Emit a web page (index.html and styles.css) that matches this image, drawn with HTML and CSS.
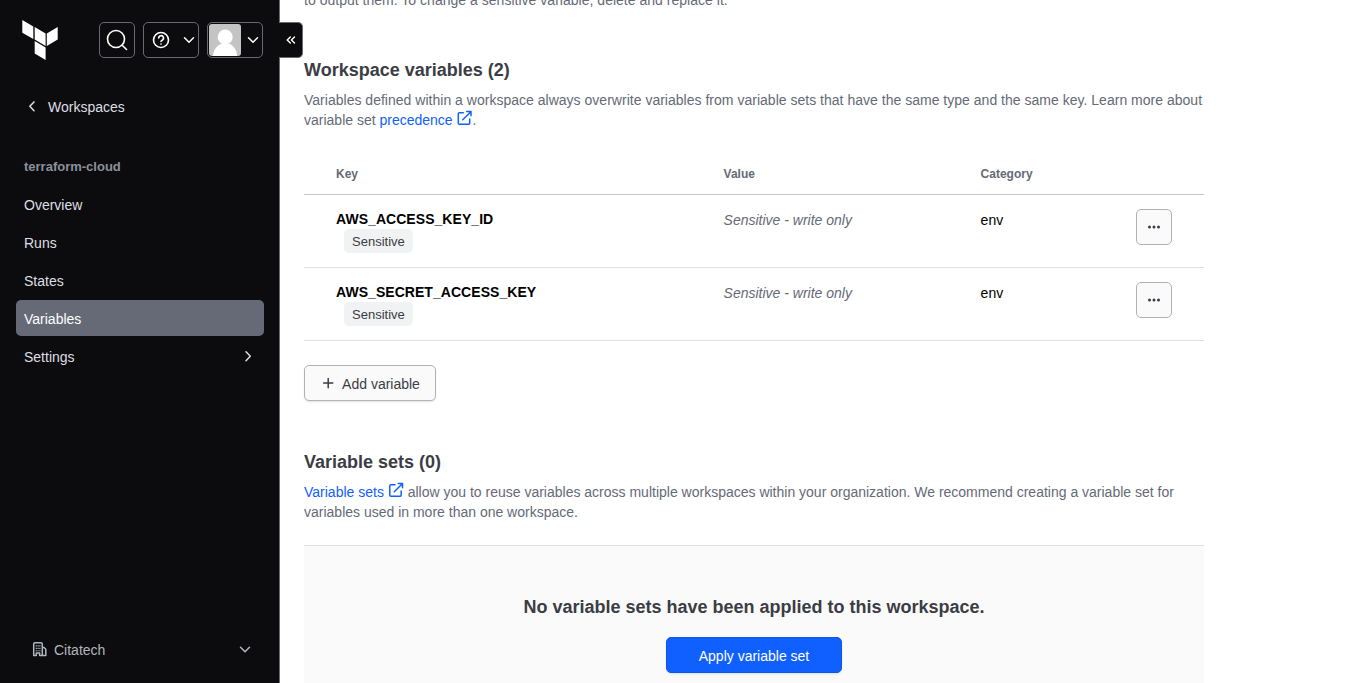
FILE: index.html
```html
<!DOCTYPE html>
<html lang="en">
<head>
<meta charset="utf-8">
<title>Variables | terraform-cloud</title>
<link rel="stylesheet" href="styles.css">
</head>
<body>
<div class="app">
  <aside class="sidebar">
    <header class="topbar">
      <svg class="logo" viewBox="0 0 36 40" width="36" height="40" fill="currentColor"><path d="M.3 0l11 6.400v12.500L.3 12.700zM12.700 7.100l10.900 6.300v12.500L12.700 19.600zM24.800 13.400L35.700 7.100v12.500L24.800 25.900zM12.700 21.100l10.900 6.300v12.500L12.700 33.600z"/></svg>
      <div class="tools">
        <button class="tool search" aria-label="Search"><svg width="24" height="24" viewBox="0 0 24 24" fill="none" stroke="currentColor" stroke-width="1.6" stroke-linecap="round"><circle cx="11" cy="11" r="8.500"/><path d="M17.200 17.200l4.300 4.300"/></svg></button>
        <button class="tool help" aria-label="Help"><svg width="18" height="18" viewBox="0 0 18 18" fill="none" stroke="currentColor" stroke-width="1.6" stroke-linecap="round" stroke-linejoin="round"><circle cx="9" cy="9" r="7.500"/><path d="M6.700 7a2.400 2.400 0 1 1 3.500 2.200C9.300 9.700 9 9.900 9 10.500"/><path d="M9 13v.1"/></svg><svg width="16" height="16" viewBox="0 0 16 16" fill="none" stroke="currentColor" stroke-width="1.5" stroke-linecap="round" stroke-linejoin="round"><path d="M3.500 5.800L8 10.200l4.500-4.400"/></svg></button>
        <button class="tool user" aria-label="Account"><svg class="avatar" width="32" height="32" viewBox="0 0 32 32"><rect width="32" height="32" fill="#c4c4c4"/><circle cx="16.200" cy="13" r="7.500" fill="#fff"/><path d="M4 32c0-5 3-9.500 7.500-12h9.500c4.500 2.500 7 7 7 12z" fill="#fff"/></svg><svg width="16" height="16" viewBox="0 0 16 16" fill="none" stroke="currentColor" stroke-width="1.5" stroke-linecap="round" stroke-linejoin="round"><path d="M3.500 5.800L8 10.200l4.500-4.400"/></svg></button>
      </div>
    </header>
    <a class="back"><svg width="16" height="16" viewBox="0 0 16 16" fill="none" stroke="currentColor" stroke-width="1.5" stroke-linecap="round" stroke-linejoin="round"><path d="M10 2.900L5.800 7.300l4.200 4.400"/></svg>Workspaces</a>
    <h2 class="nav-title">terraform-cloud</h2>
    <nav class="nav">
      <a class="nav-item">Overview</a>
      <a class="nav-item">Runs</a>
      <a class="nav-item">States</a>
      <a class="nav-item active">Variables</a>
      <a class="nav-item">Settings<svg width="16" height="16" viewBox="0 0 16 16" fill="none" stroke="currentColor" stroke-width="1.5" stroke-linecap="round" stroke-linejoin="round"><path d="M6 2.700L10.300 7.200 6 11.700"/></svg></a>
    </nav>
    <button class="org"><svg width="16" height="16" viewBox="0 0 16 16" fill="none" stroke="currentColor" stroke-width="1.500" stroke-linecap="round" stroke-linejoin="round"><path d="M1.700 13.500V2.200q0-1.400 1.400-1.400h5.800q1.400 0 1.400 1.400V13.500M1.700 13.500h2.600v-2.600h3.300v2.600h6.200V7.200l-1.700-1.700h-1.500"/><path stroke-width="1.200" stroke-linecap="butt" stroke-dasharray="1.300 1.200" d="M4.300 3.200v6M6.100 3.200v6M7.900 3.200v6"/></svg><span>Citatech</span><svg class="caret" width="16" height="16" viewBox="0 0 16 16" fill="none" stroke="currentColor" stroke-width="1.5" stroke-linecap="round" stroke-linejoin="round"><path d="M3.500 5.300L8 9.700l4.500-4.400"/></svg></button>
    <button class="collapse" aria-label="Collapse"><svg width="16" height="16" viewBox="0 0 16 16" fill="none" stroke="currentColor" stroke-width="1.400" stroke-linecap="round" stroke-linejoin="round"><path d="M7.300 5L4.200 8l3.100 3M11.500 5L8.400 8l3.100 3"/></svg></button>
  </aside>
  <main class="main">
    <p class="text intro">to output them. To change a sensitive variable, delete and replace it.</p>
    <section class="workspace-vars">
      <h3 class="heading">Workspace variables (2)</h3>
      <p class="text"><span class="wide">Variables defined within a workspace always overwrite variables from variable sets that have the same type and the same key. Learn more about</span><br>variable set <a class="link">precedence <svg class="external" width="16" height="16" viewBox="0 0 16 16" fill="none" stroke="currentColor" stroke-width="1.500" stroke-linecap="round" stroke-linejoin="round"><path d="M6.300 2.800H2.300q-1 0-1 1v9.400q0 1 1 1h9.400q1 0 1-1V9M9.700 1.500h4.300v4.300M13.800 1.700L5.800 9.700"/></svg></a>.</p>
      <div class="table">
        <div class="row head"><span>Key</span><span>Value</span><span>Category</span></div>
        <div class="row">
          <div class="key"><strong>AWS_ACCESS_KEY_ID</strong><span class="tag">Sensitive</span></div>
          <em class="value">Sensitive - write only</em><span class="category">env</span>
          <button class="button more" aria-label="More"><svg width="16" height="16" viewBox="0 0 16 16" fill="currentColor"><circle cx="3.500" cy="8" r="1.500"/><circle cx="8" cy="8" r="1.500"/><circle cx="12.500" cy="8" r="1.500"/></svg></button>
        </div>
        <div class="row">
          <div class="key"><strong>AWS_SECRET_ACCESS_KEY</strong><span class="tag">Sensitive</span></div>
          <em class="value">Sensitive - write only</em><span class="category">env</span>
          <button class="button more" aria-label="More"><svg width="16" height="16" viewBox="0 0 16 16" fill="currentColor"><circle cx="3.500" cy="8" r="1.500"/><circle cx="8" cy="8" r="1.500"/><circle cx="12.500" cy="8" r="1.500"/></svg></button>
        </div>
      </div>
      <button class="button add"><svg width="16" height="16" viewBox="0 0 16 16" fill="none" stroke="currentColor" stroke-width="1.500" stroke-linecap="round"><path d="M8.200 2.500v9.200M3.600 7.100h9.200"/></svg>Add variable</button>
    </section>
    <section class="variable-sets">
      <h3 class="heading">Variable sets (0)</h3>
      <p class="text"><a class="link">Variable sets <svg class="external" width="16" height="16" viewBox="0 0 16 16" fill="none" stroke="currentColor" stroke-width="1.500" stroke-linecap="round" stroke-linejoin="round"><path d="M7 2.800H2.800q-1 0-1 1v9.400q0 1 1 1h9.400q1 0 1-1V9M10.200 1.500h4.300v4.300M14.300 1.700L6.300 9.700"/></svg></a> allow you to reuse variables across multiple workspaces within your organization. We recommend creating a variable set for<br>variables used in more than one workspace.</p>
      <div class="empty">
        <h3 class="heading">No variable sets have been applied to this workspace.</h3>
        <button class="button primary">Apply variable set</button>
      </div>
    </section>
  </main>
</div>
</body>
</html>
```
FILE: styles.css
```css
* { box-sizing: border-box; }
body { margin: 0; overflow: hidden; background: #fff; font: 14px/20px "Liberation Sans", Arial, sans-serif; color: #000; }
h2, h3, p { margin: 0; }
button { margin: 0; padding: 0; font: inherit; color: inherit; }
svg { display: block; flex: none; }

.app { display: flex; height: 683px; overflow: hidden; }

.sidebar { position: relative; flex: none; display: flex; flex-direction: column; width: 280px; padding: 20px 15px 15px 16px; background: #0c0c0e; border-right: 1px solid #656a76; color: #dedfe3; }
.topbar { display: flex; justify-content: space-between; height: 40px; padding-left: 6px; color: #fff; }
.tools { display: flex; gap: 8px; padding: 2px 1px 0 0; }
.tool { display: flex; align-items: center; height: 36px; background: transparent; border: 1px solid #656a76; border-radius: 5px; }
.search { width: 36px; justify-content: center; }
.help { width: 56px; justify-content: space-between; padding: 0 1px 0 8px; }
.user { width: 56px; justify-content: space-between; padding: 0 1px; }
.avatar { border-radius: 3px; }

.back { display: flex; align-items: center; gap: 8px; height: 36px; margin-top: 29px; padding-left: 8px; }
.nav-title { margin: 32px 0 9px; padding-left: 8px; font-size: 13px; line-height: 20px; color: #8c909c; }
.nav { display: flex; flex-direction: column; gap: 2px; }
.nav-item { display: flex; align-items: center; justify-content: space-between; height: 36px; padding: 1px 8px 0; border-radius: 5px; }
.active { background: #656a76; color: #fff; }
.org { display: flex; align-items: center; gap: 6px; height: 36px; margin-top: auto; padding: 0 11px 0 16px; border: 0; background: transparent; color: #b2b6bd; }
.caret { margin-left: auto; }
.collapse { position: absolute; z-index: 1; top: 22px; left: 279px; display: flex; align-items: center; width: 24px; height: 36px; padding-left: 4px; background: #0c0c0e; border: 1px solid #656a76; border-left: 0; border-radius: 0 5px 5px 0; color: #fff; }

.main { flex: none; width: 924px; padding-left: 24px; }
.text { color: #656a76; white-space: nowrap; }
.intro { margin-top: -10px; letter-spacing: .02px; }
.wide { letter-spacing: .015px; }
.heading { font-size: 18px; line-height: 24px; color: #3b3d45; white-space: nowrap; }
.heading + .text { margin-top: 8px; }
.workspace-vars { margin-top: 48px; }
.variable-sets { margin-top: 49px; }
.link { color: #1060ff; }
.external { display: inline-block; vertical-align: -1px; }

.table { margin-top: 24px; }
.row { display: grid; grid-template-columns: 387.6px 257px 155.4px 36px; height: 73px; padding: 14px 32px 0; border-bottom: 1px solid #dedfe3; }
.head { height: 41px; padding-top: 10px; border-color: #c2c5cb; font-size: 12px; font-weight: bold; color: #656a76; }
.key { display: flex; flex-direction: column; align-items: flex-start; letter-spacing: .05px; }
.tag { height: 24px; margin-left: 8px; padding: 3px 8px 1px; background: #f1f2f3; border-radius: 5px; font-size: 13px; letter-spacing: 0; color: #3b3d45; }
.value { padding-top: 1px; color: #656a76; }
.category { padding-top: 1px; }

.button { display: flex; align-items: center; justify-content: center; height: 36px; padding-top: 1px; border: 1px solid #b0b1b4; border-radius: 5px; background: #fafafa; color: #3b3d45; box-shadow: 0 1px 1px rgba(101, 106, 118, .08), 0 2px 2px rgba(101, 106, 118, .06); }
.more { width: 36px; padding: 0; box-shadow: none; }
.add { gap: 6px; width: 132px; margin-top: 24px; }
.primary { width: 176px; margin-top: 18px; background: #1060ff; border-color: #0c56e9; color: #fff; }
.empty { display: flex; flex-direction: column; align-items: center; height: 160px; margin-top: 23px; padding-top: 49px; background: #fafafa; border-top: 1px solid #dedfe3; }
```
